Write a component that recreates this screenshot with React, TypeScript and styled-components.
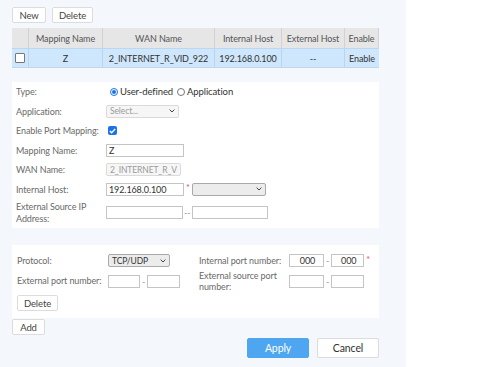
import { FunctionComponent, ReactNode } from "react";
import styled, { createGlobalStyle } from "styled-components";

const GlobalStyle = createGlobalStyle`
  html, body {
    margin: 0;
    padding: 0;
    background: #ffffff;
  }
  body {
    font-family: Lato, "Liberation Sans", Arial, sans-serif;
    font-size: 9px;
    letter-spacing: -0.1px;
    color: #666;
  }
`;

const Page = styled.div`
  width: 480px;
  height: 367px;
  display: flex;
  flex-direction: row;
  overflow: hidden;
`;
const Main = styled.div`
  width: 406px;
  height: 100%;
  background: #f4f7fb;
  padding: 7px 0 0 12px;
  box-sizing: border-box;
  display: flex;
  flex-direction: column;
`;
const Content = styled.div`
  width: 367px;
  display: flex;
  flex-direction: column;
`;
const Toolbar = styled.div`
  display: flex;
  gap: 6px;
`;
const Button = styled.div<{ $w: number }>`
  width: ${(p) => p.$w}px;
  height: 16px;
  box-sizing: border-box;
  border: 1px solid #dcdcdc;
  border-radius: 2px;
  background: #fff;
  color: #444;
  display: flex;
  align-items: center;
  justify-content: center;
  font-size: 9.5px;
`;
const Table = styled.div`
  margin-top: 5px;
  display: grid;
  grid-template-columns: 17px 74px 112px 67px 63px 34px;
`;
const HeadCell = styled.div`
  height: 20px;
  background: #e6e6e6;
  border-right: 1px solid #d2d2d2;
  box-sizing: border-box;
  display: flex;
  align-items: center;
  justify-content: center;
  color: #555;
  white-space: nowrap;
  &:last-child {
    border-right: none;
  }
`;
const BodyCell = styled.div`
  height: 20px;
  background: #cfe7fc;
  border-right: 1px solid #b9d5ee;
  border-top: 1px solid #bcd7ef;
  border-bottom: 1px solid #bcd7ef;
  box-sizing: border-box;
  display: flex;
  align-items: center;
  justify-content: center;
  color: #333;
  white-space: nowrap;
  &:last-child {
    border-right: none;
  }
`;
const Square = styled.div`
  width: 8px;
  height: 8px;
  border: 1px solid #777;
  border-radius: 1px;
  background: #fff;
`;
const Panel = styled.div<{ $top: number; $h: number }>`
  margin-top: ${(p) => p.$top}px;
  height: ${(p) => p.$h}px;
  background: #fff;
  box-sizing: border-box;
`;
const FormPanel = styled(Panel)`
  padding: 0 0 0 4px;
  display: flex;
  flex-direction: column;
`;
const FormRow = styled.div<{ $h?: number }>`
  height: ${(p) => p.$h ?? 19.5}px;
  display: grid;
  grid-template-columns: 90px 1fr;
  align-items: center;
`;
const Label = styled.div`
  color: #6a6a6a;
  line-height: 11.5px;
  white-space: nowrap;
`;
const Field = styled.div<{ $gap?: number }>`
  display: flex;
  align-items: center;
  gap: ${(p) => p.$gap ?? 2}px;
`;
const Input = styled.div<{ $w: number; $center?: boolean }>`
  width: ${(p) => p.$w}px;
  height: 13px;
  box-sizing: border-box;
  border: 1px solid #c4c4c4;
  background: #fff;
  color: #333;
  padding-left: 2px;
  display: flex;
  align-items: center;
  justify-content: ${(p) => (p.$center ? "center" : "flex-start")};
  font-size: 9px;
  overflow: hidden;
  white-space: nowrap;
`;
const SelectBox = styled.div<{ $w: number; $muted?: boolean }>`
  width: ${(p) => p.$w}px;
  height: 13px;
  box-sizing: border-box;
  border: 1px solid ${(p) => (p.$muted ? "#dadada" : "#a9a9a9")};
  border-radius: 2px;
  background: ${(p) => (p.$muted ? "#f6f6f6" : "#ececec")};
  color: ${(p) => (p.$muted ? "#9a9a9a" : "#333")};
  padding: 0 3px;
  display: flex;
  align-items: center;
  justify-content: space-between;
  font-size: 8.5px;
  white-space: nowrap;
  overflow: hidden;
`;
const Star = styled.span`
  color: #e0504f;
  font-size: 9px;
  margin-top: -3px;
`;
const Dash = styled.span`
  color: #999;
  font-size: 9px;
`;
const RadioGroup = styled.div`
  display: flex;
  align-items: center;
  gap: 2px;
  color: #333;
  font-size: 9.5px;
`;
const Radio = styled.span<{ $on?: boolean; $gap?: number }>`
  width: 8px;
  height: 8px;
  border-radius: 50%;
  box-sizing: border-box;
  border: 1px solid ${(p) => (p.$on ? "#1a73e8" : "#777")};
  display: inline-flex;
  align-items: center;
  justify-content: center;
  margin-left: ${(p) => p.$gap ?? 0}px;
  &::after {
    content: "";
    width: 4px;
    height: 4px;
    border-radius: 50%;
    background: ${(p) => (p.$on ? "#1a73e8" : "transparent")};
  }
`;
const CheckOn = styled.div`
  width: 9px;
  height: 9px;
  border-radius: 2px;
  background: #1a73e8;
  display: flex;
  align-items: center;
  justify-content: center;
  margin-left: 2px;
`;
const PortPanel = styled(Panel)`
  padding: 6px 0 0 5px;
  display: grid;
  grid-template-columns: 91px 91px 90px 1fr;
  grid-template-rows: 19px 22px 22px;
  align-items: center;
`;
const Footer = styled.div`
  margin-top: 3px;
  display: flex;
  justify-content: flex-end;
  gap: 8px;
`;
const ActionButton = styled.div<{ $primary?: boolean }>`
  width: 62px;
  height: 20px;
  box-sizing: border-box;
  border-radius: 2px;
  border: 1px solid ${(p) => (p.$primary ? "#4ea6f1" : "#dcdcdc")};
  background: ${(p) => (p.$primary ? "#4ea6f1" : "#fff")};
  color: ${(p) => (p.$primary ? "#fff" : "#333")};
  display: flex;
  align-items: center;
  justify-content: center;
  font-size: 10.5px;
`;

const Chevron: FunctionComponent = () => (
  <svg width="6" height="4" viewBox="0 0 6 4">
    <path d="M0.6 0.6 L3 3 L5.4 0.6" fill="none" stroke="#444" strokeWidth="1" />
  </svg>
);

const Select: FunctionComponent<{ w: number; muted?: boolean; children?: ReactNode }> = ({
  w,
  muted,
  children,
}) => (
  <SelectBox $w={w} $muted={muted}>
    <span>{children}</span>
    <Chevron />
  </SelectBox>
);

const headers = ["", "Mapping Name", "WAN Name", "Internal Host", "External Host", "Enable"];

const App: FunctionComponent = () => {
  return (
    <Page>
      <GlobalStyle />
      <Main>
        <Content>
          <Toolbar>
            <Button $w={34}>New</Button>
            <Button $w={41}>Delete</Button>
          </Toolbar>
          <Table>
            {headers.map((h, i) => (
              <HeadCell key={i}>{h}</HeadCell>
            ))}
            <BodyCell>
              <Square />
            </BodyCell>
            <BodyCell>Z</BodyCell>
            <BodyCell>2_INTERNET_R_VID_922</BodyCell>
            <BodyCell>192.168.0.100</BodyCell>
            <BodyCell>--</BodyCell>
            <BodyCell>Enable</BodyCell>
          </Table>
          <FormPanel $top={14} $h={146}>
            <FormRow>
              <Label>Type:</Label>
              <RadioGroup>
                <Radio $on $gap={4} />
                User-defined
                <Radio $gap={2} />
                Application
              </RadioGroup>
            </FormRow>
            <FormRow>
              <Label>Application:</Label>
              <Field>
                <Select w={73} muted>
                  Select...
                </Select>
              </Field>
            </FormRow>
            <FormRow>
              <Label>Enable Port Mapping:</Label>
              <Field>
                <CheckOn>
                  <svg width="7" height="6" viewBox="0 0 7 6">
                    <path d="M0.8 3 L2.7 4.8 L6.2 0.9" fill="none" stroke="#fff" strokeWidth="1.4" />
                  </svg>
                </CheckOn>
              </Field>
            </FormRow>
            <FormRow>
              <Label>Mapping Name:</Label>
              <Field>
                <Input $w={78}>Z</Input>
              </Field>
            </FormRow>
            <FormRow>
              <Label>WAN Name:</Label>
              <Field>
                <Select w={75} muted>
                  2_INTERNET_R_V
                </Select>
              </Field>
            </FormRow>
            <FormRow>
              <Label>Internal Host:</Label>
              <Field>
                <Input $w={78}>192.168.0.100</Input>
                <Star>*</Star>
                <Select w={74}></Select>
              </Field>
            </FormRow>
            <FormRow $h={27}>
              <Label>
                External Source IP
                <br />
                Address:
              </Label>
              <Field $gap={1}>
                <Input $w={77} />
                <Dash>--</Dash>
                <Input $w={76} />
              </Field>
            </FormRow>
          </FormPanel>
          <PortPanel $top={17} $h={73}>
            <Label>Protocol:</Label>
            <Field>
              <Select w={62}>TCP/UDP</Select>
            </Field>
            <Label>Internal port number:</Label>
            <Field>
              <Input $w={35} $center>000</Input>
              <Dash>-</Dash>
              <Input $w={33} $center>000</Input>
              <Star>*</Star>
            </Field>
            <Label>External port number:</Label>
            <Field>
              <Input $w={32} />
              <Dash>-</Dash>
              <Input $w={33} />
            </Field>
            <Label>
              External source port
              <br />
              number:
            </Label>
            <Field>
              <Input $w={35} />
              <Dash>-</Dash>
              <Input $w={33} />
            </Field>
            <Field>
              <Button $w={41}>Delete</Button>
            </Field>
          </PortPanel>
          <Field style={{ marginTop: 1 }}>
            <Button $w={33}>Add</Button>
          </Field>
          <Footer>
            <ActionButton $primary>Apply</ActionButton>
            <ActionButton>Cancel</ActionButton>
          </Footer>
        </Content>
      </Main>
    </Page>
  );
};

export default App;
